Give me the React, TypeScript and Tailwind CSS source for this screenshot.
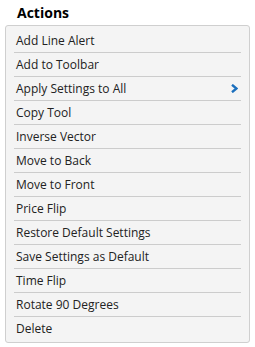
const items = [
  'Add Line Alert',
  'Add to Toolbar',
  'Apply Settings to All',
  'Copy Tool',
  'Inverse Vector',
  'Move to Back',
  'Move to Front',
  'Price Flip',
  'Restore Default Settings',
  'Save Settings as Default',
  'Time Flip',
  'Rotate 90 Degrees',
  'Delete',
]

export default function App() {
  return (
    <div className="min-h-screen bg-white font-['Open_Sans',sans-serif] text-[#222]">
      <h1 className="pl-[17px] pt-[1px] text-[14px] leading-[24px] font-bold text-black">Actions</h1>

      <div className="ml-[5px] w-[245px] rounded-[3px] border border-[#cfcfcf] bg-[#f4f4f4] px-[8px] pt-[3px] pb-[1px]">
        {items.map((label, i) => (
          <div
            key={label}
            className={`flex h-[24px] items-center justify-between pl-[2px] text-[12px] ${
              i < items.length - 1 ? 'border-b border-[#cccccc]' : ''
            }`}
          >
            <span>{label}</span>
            {label === 'Apply Settings to All' && (
              <svg width="7" height="9" viewBox="0 0 7 9" className="mr-[3px]">
                <path d="M1 0.8 L5.5 4.5 L1 8.2" fill="none" stroke="#1b6fbd" strokeWidth="2.4" />
              </svg>
            )}
          </div>
        ))}
      </div>
    </div>
  )
}
